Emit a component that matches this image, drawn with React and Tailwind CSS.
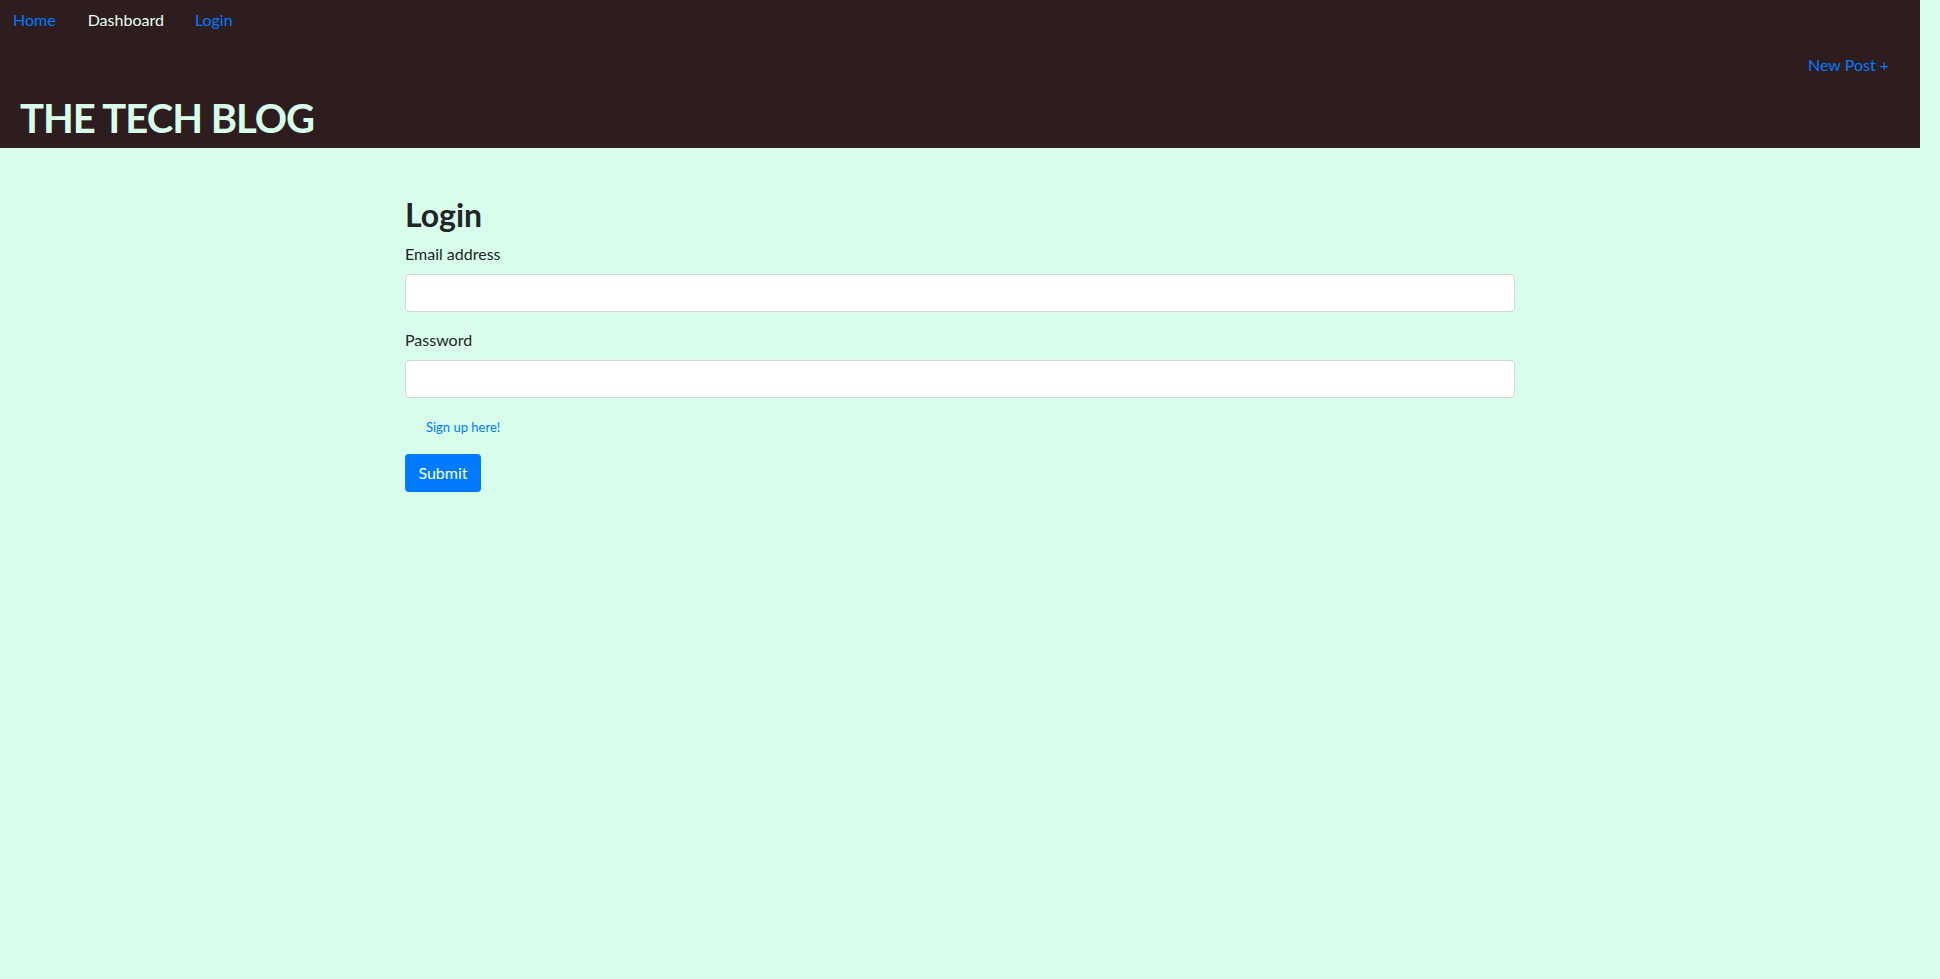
export default function App() {
  return (
    <div className="min-h-screen bg-[#d8fdea] font-['Lato','Liberation_Sans',sans-serif] text-[#212529]">
      <header className="w-[1920px] h-[148px] bg-[#2e1d1e] flex flex-col">
        <nav className="flex h-10 items-center ml-[-3px]">
          <a href="#" className="px-4 text-base leading-6 text-[#007bff]">Home</a>
          <a href="#" className="px-4 text-base leading-6 text-[#e9fff4]">Dashboard</a>
          <a href="#" className="pl-[15px] pr-4 text-base leading-6 text-[#007bff]">Login</a>
        </nav>
        <div className="flex justify-end mt-[13px] h-6 pr-[31px]">
          <a href="#" className="text-base leading-6 text-[#007bff]">New Post +</a>
        </div>
        <h1 className="mt-[17px] pl-5 text-[40px] leading-[48px] font-bold tracking-[-1px] text-[#d8fdea]">
          THE TECH BLOG
        </h1>
      </header>

      <main className="w-[1920px]">
        <div className="w-[1110px] mx-auto pt-12">
          <h2 className="text-[32px] leading-[38px] font-bold mb-2">Login</h2>
          <form>
            <div className="mb-4">
              <label className="block text-base leading-6 mb-2">Email address</label>
              <input type="email" className="block w-full h-[38px] bg-white border border-[#ced4da] rounded px-3" />
            </div>
            <div>
              <label className="block text-base leading-6 mb-2">Password</label>
              <input type="password" className="block w-full h-[38px] bg-white border border-[#ced4da] rounded px-3" />
            </div>
            <div className="mt-[16px] h-5 pl-[21px]">
              <a href="#" className="text-[13px] leading-5 text-[#007bff]">Sign up here!</a>
            </div>
            <button type="submit" className="mt-[20px] h-[38px] w-[76px] rounded bg-[#007bff] text-white text-base leading-6">
              Submit
            </button>
          </form>
        </div>
      </main>
    </div>
  );
}
